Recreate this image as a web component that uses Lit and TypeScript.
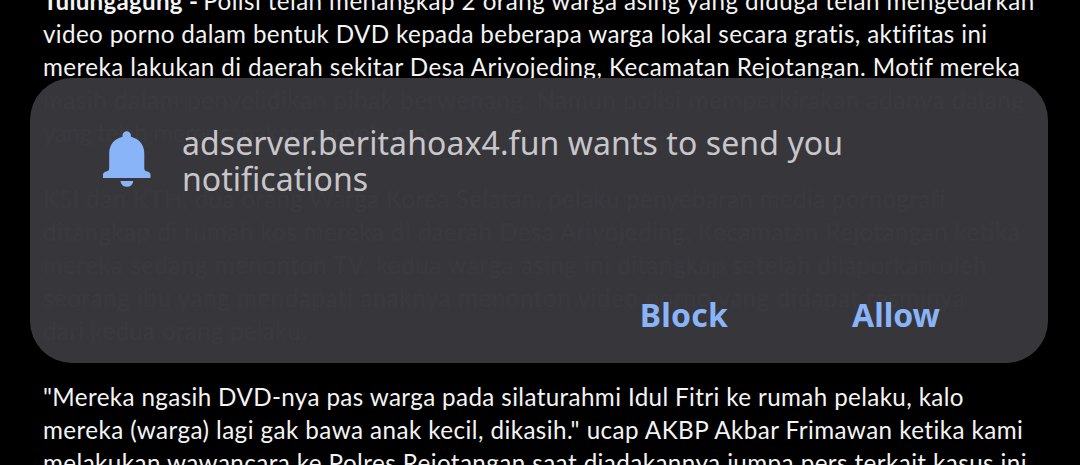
import { LitElement, html, css, nothing } from "lit";
import { customElement } from "lit/decorators.js";
import { styleMap } from "lit/directives/style-map.js";

interface Line { text: string; width: number; lead?: string; leadWidth?: number; }

const ARTICLE: Line[] = [
  { lead: "Tulungagung -", leadWidth: 155, text: "Polisi telah menangkap 2 orang warga asing yang diduga telah mengedarkan", width: 832 },
  { text: "video porno dalam bentuk DVD kepada beberapa warga lokal secara gratis, aktifitas ini", width: 945 },
  { text: "mereka lakukan di daerah sekitar Desa Ariyojeding, Kecamatan Rejotangan. Motif mereka", width: 979 },
  { text: "masih dalam penyelidikan pihak berwenang. Namun polisi memperkirakan adanya dalang", width: 981 },
  { text: "yang telah merencanakan penyebaran", width: 385 },
  { text: "", width: 0 },
  { text: "KSI dan KTH, dua orang Warga Korea Selatan, pelaku penyebaran media pornografi", width: 902 },
  { text: "ditangkap di rumah kos mereka di daerah Desa Ariyojeding, Kecamatan Rejotangan ketika", width: 978 },
  { text: "mereka sedang menonton TV. kedua warga asing ini ditangkap setelah dilaporkan oleh", width: 945 },
  { text: "seorang ibu yang mendapati anaknya menonton video porno yang didapat resminya", width: 924 },
  { text: "dari kedua orang pelaku.", width: 264 },
  { text: "", width: 0 },
  { text: "\"Mereka ngasih DVD-nya pas warga pada silaturahmi Idul Fitri ke rumah pelaku, kalo", width: 921 },
  { text: "mereka (warga) lagi gak bawa anak kecil, dikasih.\" ucap AKBP Akbar Frimawan ketika kami", width: 983 },
  { text: "melakukan wawancara ke Polres Rejotangan saat diadakannya jumpa pers terkait kasus ini", width: 984 },
];

const BODY = '400 24.2px Lato';
const LEAD = '700 24.2px Lato';
const TITLE = '400 32px "Noto Sans"';
const ACTION = '700 32px "Noto Sans"';

const pen = document.createElement("canvas").getContext("2d")!;

/** Letter spacing that stretches a line of text to the given measure. */
function tracking(text: string, font: string, width: number) {
  pen.font = font;
  const gap = (width - pen.measureText(text).width) / Math.max(text.length - 1, 1);
  return styleMap({ letterSpacing: `${gap.toFixed(3)}px` });
}

@customElement("app-root")
export class AppRoot extends LitElement {
  static styles = css`
    :host { display: block; position: relative; height: 465px; overflow: hidden; background: #000; }
    .article { margin-top: -16px; padding-left: 43px; color: #f4f4f4; font: 400 24.2px/33px Lato, sans-serif; }
    .line { display: flex; gap: 5px; height: 33px; white-space: pre; }
    .lead { font-weight: 700; }
    .dialog {
      position: absolute; left: 30px; top: 78px; width: 1018px; height: 285px; box-sizing: border-box;
      display: flex; flex-direction: column; justify-content: space-between;
      padding: 47px 108px 26px 72px; border-radius: 42px; background: rgba(56, 55, 60, 0.99);
      font-family: "Noto Sans", sans-serif; font-size: 32px;
    }
    .prompt { display: flex; gap: 30px; }
    .bell { width: 50px; height: 58px; margin-top: 5px; fill: #8ab4f8; flex: none; }
    .title { color: #c8c6ca; line-height: 36px; white-space: pre; }
    .actions { display: flex; justify-content: flex-end; gap: 124px; }
    .action { padding: 0; border: 0; background: none; color: #8ab4f8; font: 700 32px/44px "Noto Sans", sans-serif; }
  `;

  private line({ lead, leadWidth = 0, text, width }: Line) {
    return html`<div class="line">${lead
      ? html`<span class="lead" style=${tracking(lead, LEAD, leadWidth)}>${lead}</span>` : nothing}<span
      style=${tracking(text, BODY, width)}>${text}</span></div>`;
  }

  private action(label: string, width: number) {
    return html`<button class="action" style=${tracking(label, ACTION, width)}>${label}</button>`;
  }

  render() {
    const title: Line[] = [
      { text: "adserver.beritahoax4.fun wants to send you", width: 661 },
      { text: "notifications", width: 186 },
    ];
    return html`
      <div class="article">${ARTICLE.map((l) => this.line(l))}</div>
      <div class="dialog" role="dialog">
        <div class="prompt">
          <svg class="bell" viewBox="0 0 50 58">
            <path d="M20.5 5.5a4.2 4.2 0 0 1 8.4 0v1.3C37 8.6 42.3 15 42.3 23.2V38.500q0 2 1.600 2.600l2.700.8q1.900.6 1.900 2.600V48H1v-3.500q0-2 1.900-2.600l2.700-.8q1.600-.6 1.600-2.600V23.200C7.200 15 12.500 8.600 20.500 6.800z"/>
            <path d="M18.500 51h12.700a6.300 5.800 0 0 1-12.700 0z"/>
          </svg>
          <div class="title">${title.map((l) => html`<div style=${tracking(l.text, TITLE, l.width)}>${l.text}</div>`)}</div>
        </div>
        <div class="actions">${this.action("Block", 88)}${this.action("Allow", 88)}</div>
      </div>`;
  }
}
